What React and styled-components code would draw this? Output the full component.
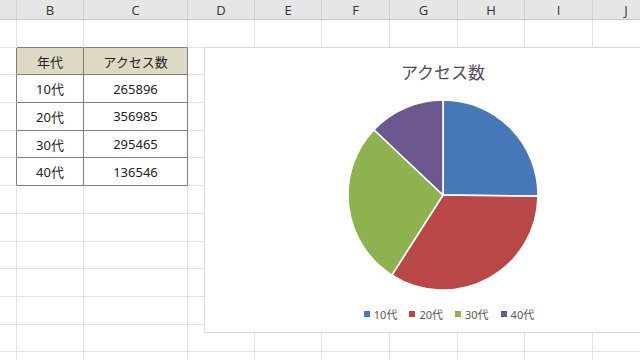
import React from 'react'
import styled, { createGlobalStyle } from 'styled-components'

const GlobalStyle = createGlobalStyle`
  body {
    margin: 0;
    background: #fff;
    overflow: hidden;
  }
`

const columns = [
  { name: '', width: 17 },
  { name: 'B', width: 67 },
  { name: 'C', width: 104 },
  { name: 'D', width: 67 },
  { name: 'E', width: 67 },
  { name: 'F', width: 68 },
  { name: 'G', width: 68 },
  { name: 'H', width: 67 },
  { name: 'I', width: 68 },
  { name: 'J', width: 67 },
]

const ROWS = 13

const data = [
  { label: '10代', value: 265896, color: '#4677b8' },
  { label: '20代', value: 356985, color: '#b94747' },
  { label: '30代', value: 295465, color: '#8eb24f' },
  { label: '40代', value: 136546, color: '#6c588e' },
]

// table sits at B2:C6 (row index 1..5, col index 1..2)
const TABLE_TOP = 1
const TABLE_LEFT = 1

const cellContent = (r, c) => {
  const tr = r - TABLE_TOP
  const tc = c - TABLE_LEFT
  if (tr < 0 || tr > data.length || tc < 0 || tc > 1) return null
  if (tr === 0) return { text: tc === 0 ? '年代' : 'アクセス数', head: true }
  const row = data[tr - 1]
  return { text: tc === 0 ? row.label : String(row.value), head: false }
}

const inTable = (r, c) => cellContent(r, c) !== null

const App = () => {
  const template = columns.map((c) => `${c.width}px`).join(' ')
  const cells = []
  for (let r = 0; r < ROWS; r++) {
    for (let c = 0; c < columns.length; c++) {
      const content = cellContent(r, c)
      const darkRight = inTable(r, c) || inTable(r, c + 1)
      const darkBottom = inTable(r, c) || inTable(r + 1, c)
      cells.push(
        <Cell key={`${r}-${c}`} $r={darkRight} $b={darkBottom} $head={content?.head}>
          {content?.text}
        </Cell>
      )
    }
  }

  return (
    <>
      <GlobalStyle />
      <Sheet>
        <ColumnHeader style={{ gridTemplateColumns: template }}>
          {columns.map((c, i) => (
            <HeaderCell key={i}>{c.name}</HeaderCell>
          ))}
        </ColumnHeader>
        <Grid style={{ gridTemplateColumns: template }}>{cells}</Grid>
        <Chart>
          <ChartTitle>アクセス数</ChartTitle>
          <Pie data={data} />
          <Legend>
            {data.map((d) => (
              <LegendItem key={d.label}>
                <Swatch $color={d.color} />
                {d.label}
              </LegendItem>
            ))}
          </Legend>
        </Chart>
      </Sheet>
    </>
  )
}

const Pie = ({ data }) => {
  const size = 192
  const cx = size / 2
  const cy = size / 2
  const r = 95
  const total = data.reduce((s, d) => s + d.value, 0)
  let start = -Math.PI / 2
  return (
    <svg width={size} height={size} viewBox={`0 0 ${size} ${size}`} style={{ marginTop: 13 }}>
      {data.map((d) => {
        const angle = (d.value / total) * Math.PI * 2
        const end = start + angle
        const x0 = cx + r * Math.cos(start)
        const y0 = cy + r * Math.sin(start)
        const x1 = cx + r * Math.cos(end)
        const y1 = cy + r * Math.sin(end)
        const large = angle > Math.PI ? 1 : 0
        const path = `M${cx} ${cy} L${x0} ${y0} A${r} ${r} 0 ${large} 1 ${x1} ${y1} Z`
        start = end
        return <path key={d.label} d={path} fill={d.color} stroke="#fff" strokeWidth="1.6" strokeLinejoin="round" />
      })}
    </svg>
  )
}

const Sheet = styled.div`
  position: relative;
  width: 640px;
  height: 360px;
  overflow: hidden;
  background: #fff;
`

const ColumnHeader = styled.div`
  display: grid;
  height: 20px;
  background: #e6e6e6;
  border-bottom: 1px solid #c6c6c6;
  box-sizing: border-box;
`

const HeaderCell = styled.div`
  display: flex;
  align-items: center;
  justify-content: center;
  border-right: 1px solid #d2d2d2;
  font-family: 'Open Sans', 'Noto Sans', sans-serif;
  font-size: 13px;
  color: #333;
`

const Grid = styled.div`
  display: grid;
  grid-auto-rows: 27.7px;
`

const Cell = styled.div`
  display: flex;
  align-items: center;
  justify-content: center;
  box-sizing: border-box;
  border-right: 1px solid ${(p) => (p.$r ? '#7f7f7f' : '#e2e2e2')};
  border-bottom: 1px solid ${(p) => (p.$b ? '#7f7f7f' : '#e2e2e2')};
  background: ${(p) => (p.$head ? '#ddd9c3' : 'transparent')};
  font-family: 'Noto Sans', 'Noto Sans CJK JP', sans-serif;
  font-size: 13px;
  color: #222;
`

const Chart = styled.div`
  position: absolute;
  left: 204px;
  top: 47px;
  width: 478px;
  height: 286px;
  box-sizing: border-box;
  background: #fff;
  border: 1px solid #d9d9d9;
  display: flex;
  flex-direction: column;
  align-items: center;
  padding-top: 10px;
`

const ChartTitle = styled.div`
  font-family: 'Noto Sans CJK JP', sans-serif;
  font-size: 17px;
  line-height: 28px;
  color: #54495a;
`

const Legend = styled.div`
  display: flex;
  gap: 12px;
  margin-top: 16px;
  margin-left: 12px;
  height: 14px;
  align-items: center;
`

const LegendItem = styled.div`
  display: flex;
  align-items: center;
  gap: 4px;
  font-family: 'Noto Sans', 'Noto Sans CJK JP', sans-serif;
  font-size: 11px;
  color: #595959;
`

const Swatch = styled.span`
  width: 6px;
  height: 6px;
  background: ${(p) => p.$color};
`

export default App
